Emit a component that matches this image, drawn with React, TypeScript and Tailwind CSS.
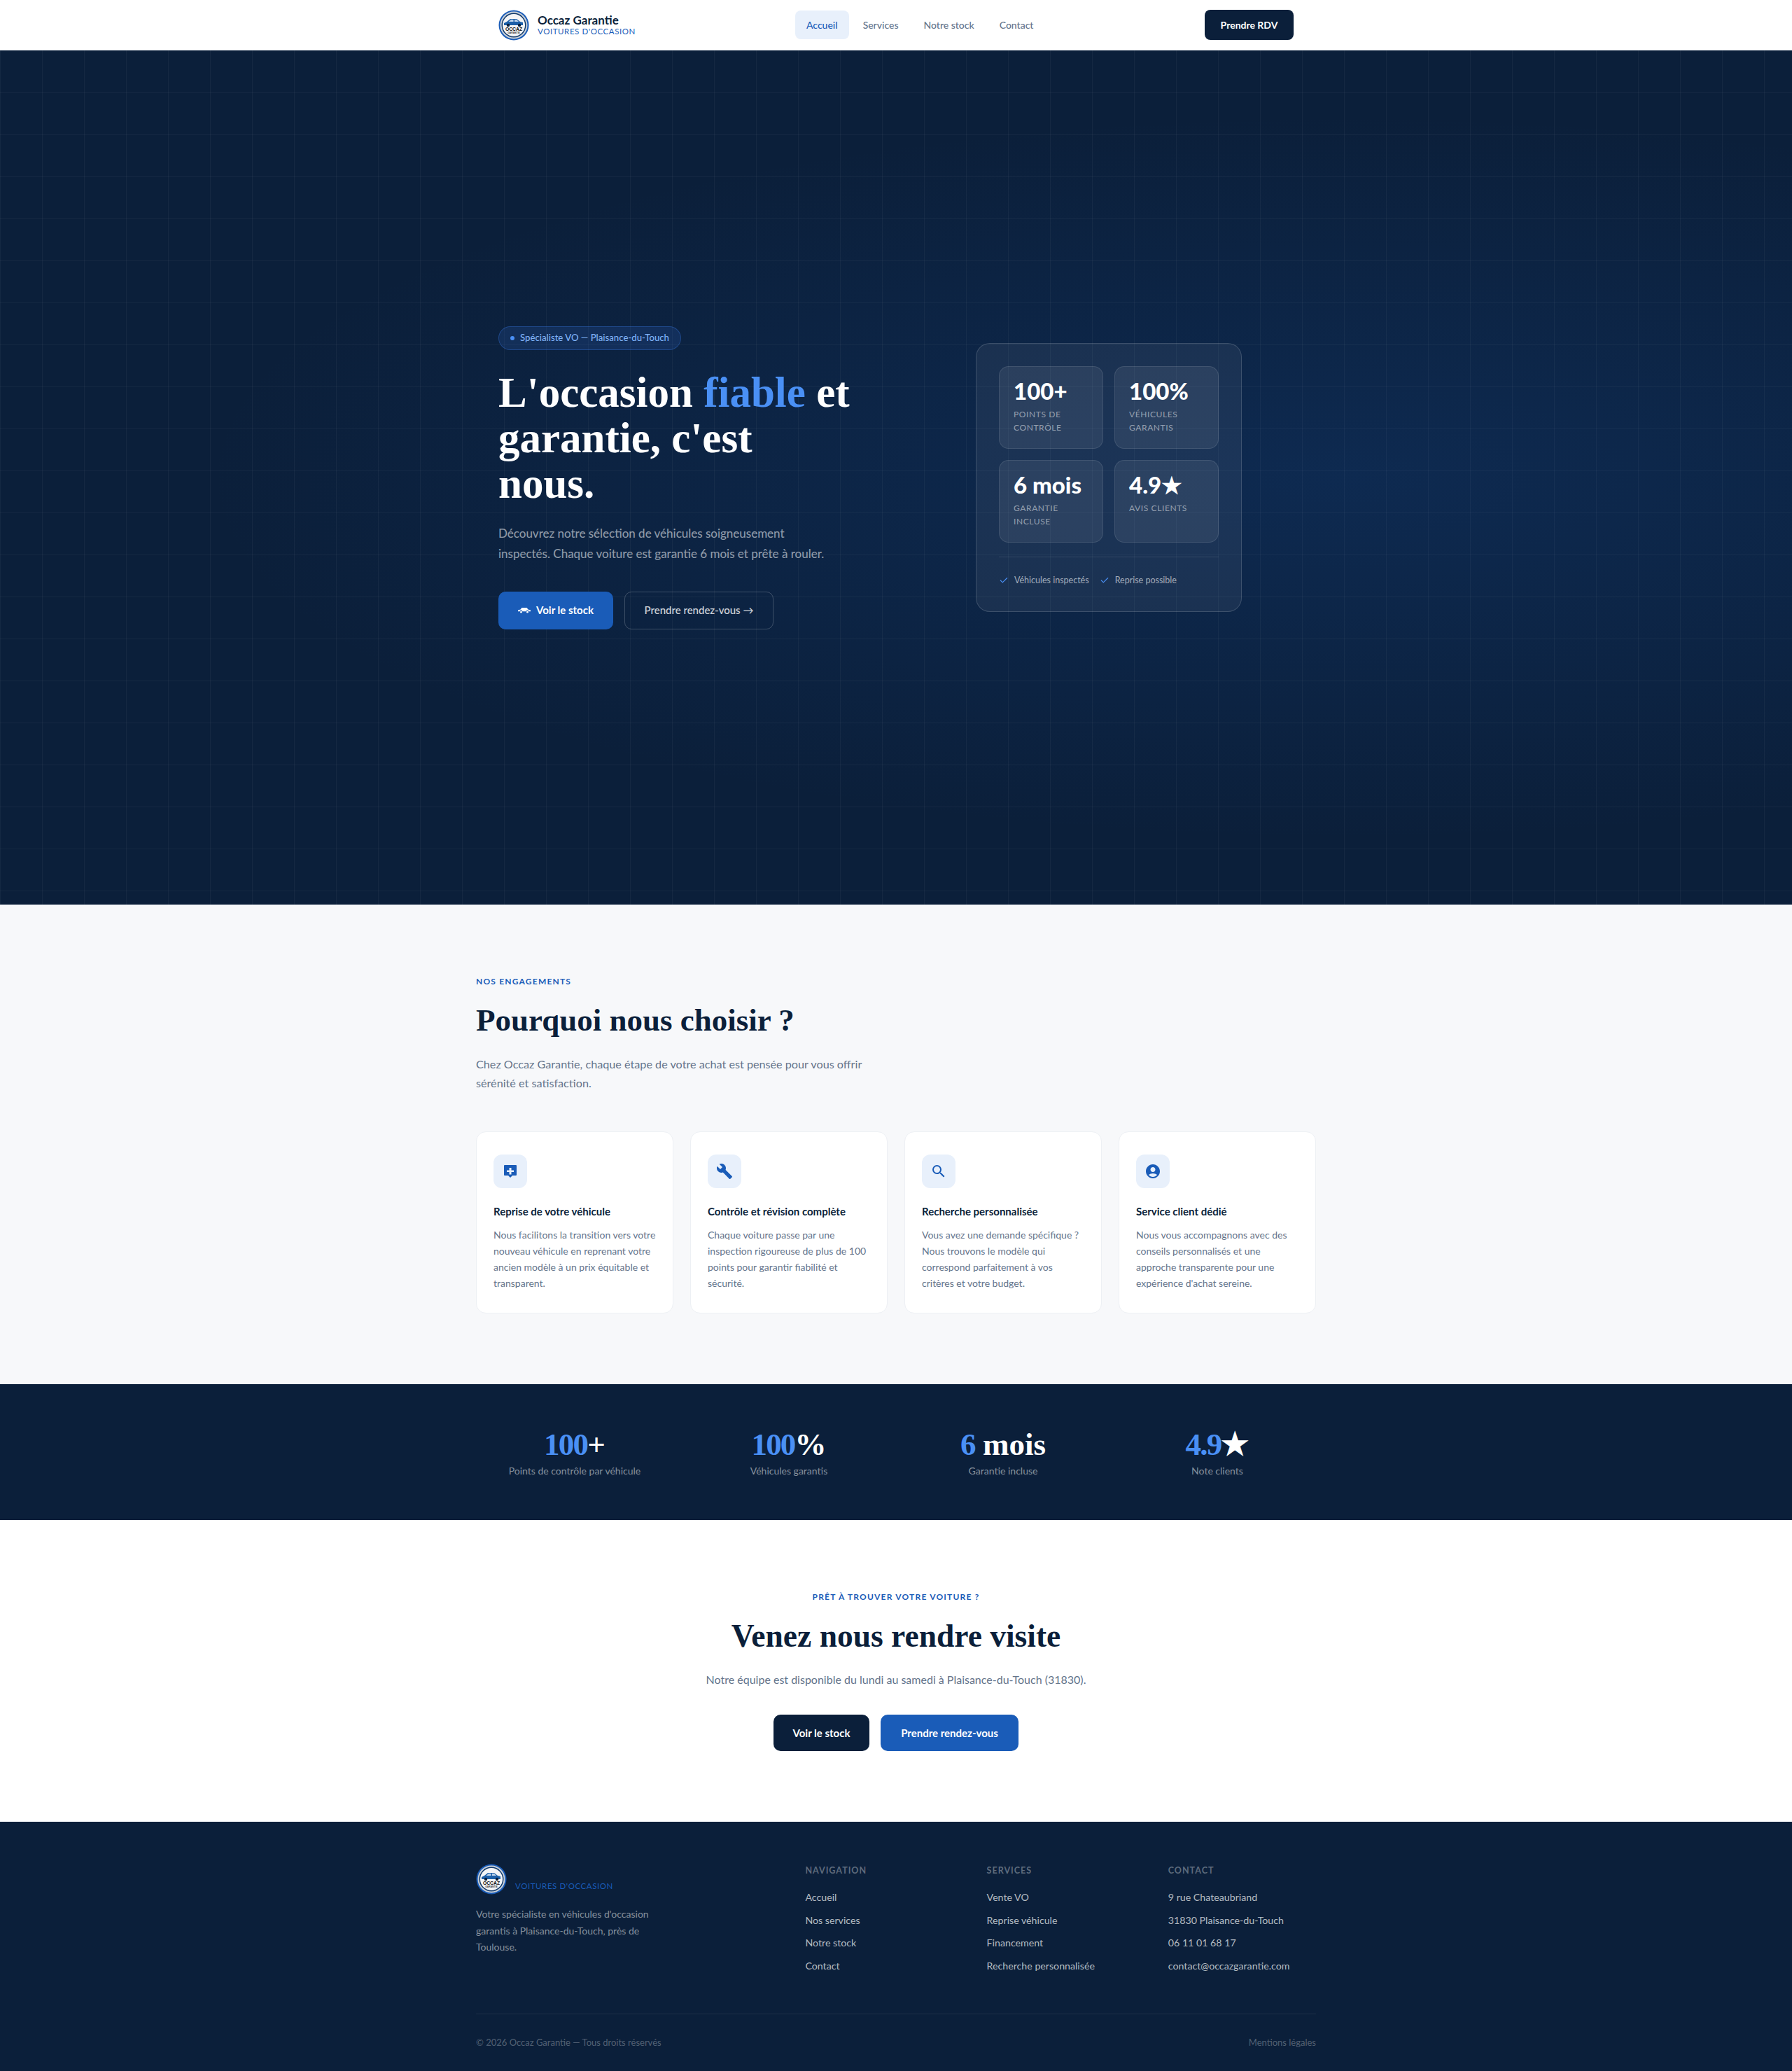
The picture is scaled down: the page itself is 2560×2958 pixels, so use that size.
import { Check } from 'lucide-react';
import { MdAccountCircle, MdBuild, MdSearch } from 'react-icons/md';

const SERIF = "font-['Liberation_Serif',serif]";

const FEATURES = [
  {
    title: 'Reprise de votre véhicule',
    text: 'Nous facilitons la transition vers votre nouveau véhicule en reprenant votre ancien modèle à un prix équitable et transparent.',
    icon: 'bubble',
  },
  {
    title: 'Contrôle et révision complète',
    text: 'Chaque voiture passe par une inspection rigoureuse de plus de 100 points pour garantir fiabilité et sécurité.',
    icon: 'wrench',
  },
  {
    title: 'Recherche personnalisée',
    text: 'Vous avez une demande spécifique ? Nous trouvons le modèle qui correspond parfaitement à vos critères et votre budget.',
    icon: 'search',
  },
  {
    title: 'Service client dédié',
    text: "Nous vous accompagnons avec des conseils personnalisés et une approche transparente pour une expérience d'achat sereine.",
    icon: 'user',
  },
];

const FOOTER_COLUMNS = [
  { title: 'NAVIGATION', links: ['Accueil', 'Nos services', 'Notre stock', 'Contact'] },
  { title: 'SERVICES', links: ['Vente VO', 'Reprise véhicule', 'Financement', 'Recherche personnalisée'] },
  { title: 'CONTACT', links: ['9 rue Chateaubriand', '31830 Plaisance-du-Touch', '06 11 01 68 17', 'contact@occazgarantie.com'] },
];

function Logo() {
  return (
    <svg viewBox="0 0 44 44" className="h-11 w-11 shrink-0">
      <circle cx="22" cy="22" r="21.5" fill="#1a5cb8" />
      <circle cx="22" cy="22" r="19.5" fill="#c9d0d8" />
      <circle cx="22" cy="22" r="17.5" fill="#123a6b" />
      <circle cx="22" cy="22" r="16" fill="#f4f5f7" />
      <path d="M8 22v-3l4-2 5-4h9l5 4 4 1v4z" fill="#1d5fa8" />
      <path d="M18 14h3.500v3H14.500zM23 14h3l3 3h-6z" fill="#bcd3ec" />
      <circle cx="14" cy="22" r="2.200" fill="#0b1f3a" />
      <circle cx="30" cy="22" r="2.200" fill="#0b1f3a" />
      <text x="22" y="29.500" textAnchor="middle" fontSize="6.800" fontWeight="700" fill="#111" fontFamily="Liberation Sans">OCCAZ</text>
      <text x="22" y="34" textAnchor="middle" fontSize="3.400" fontWeight="700" fill="#333" fontFamily="Liberation Sans">GARANTIE</text>
    </svg>
  );
}

function FeatureIcon({ name }: { name: string }) {
  if (name === 'wrench') return <MdBuild className="h-6 w-6 text-[#1a5cb8]" />;
  if (name === 'search') return <MdSearch className="h-6 w-6 text-[#1a5cb8]" />;
  if (name === 'user') return <MdAccountCircle className="h-6 w-6 text-[#1a5cb8]" />;
  return (
    <svg viewBox="0 0 24 24" className="h-6 w-6" fill="#1a5cb8">
      <path d="M4 3h16a1 1 0 0 1 1 1v13a1 1 0 0 1-1 1h-5l-3 3-3-3H4a1 1 0 0 1-1-1V4a1 1 0 0 1 1-1zm6.500 4v3.500H7v2.500h3.500V16.500h3V13H17v-2.500h-3.500V7z" fillRule="evenodd" />
    </svg>
  );
}

function StatTile({ value, label }: { value: string; label: string }) {
  return (
    <div className="h-[118px] rounded-[14px] border border-white/10 bg-white/[0.07] px-5 pt-[17px]">
      <div className="text-[33px] leading-[34px] font-black text-white">{value}</div>
      <div className="mt-[7px] text-[12px] leading-[19px] tracking-[0.05em] text-white/50 uppercase">{label}</div>
    </div>
  );
}

function BandStat({ accent, rest, label }: { accent: string; rest: string; label: string }) {
  return (
    <div className="text-center">
      <div className={`${SERIF} text-[45px] leading-[53px] font-bold text-white`}>
        <span className="tracking-[-0.04em] text-[#4a90f5]">{accent}</span>
        {rest}
      </div>
      <div className="mt-[1px] text-[14px] leading-[20px] text-white/50">{label}</div>
    </div>
  );
}

export default function App() {
  return (
    <div className="min-h-[2958px] bg-white font-['Lato',sans-serif] text-[#0b1f3a]">
      {/* Nav */}
      <header className="h-[72px] border-b border-[#e8ecf1] bg-white">
        <div className="mx-auto flex h-full w-[1136px] items-center">
          <div className="flex w-[424px] items-center gap-3">
            <Logo />
            <div>
              <div className="text-[17px] leading-[18px] font-bold">Occaz Garantie</div>
              <div className="text-[11.500px] leading-[14px] tracking-[0.05em] text-[#1a5cb8]">VOITURES D'OCCASION</div>
            </div>
          </div>
          <nav className="flex items-center gap-1 text-[14px] font-medium text-[#64748b]">
            <a className="rounded-lg bg-[#e8f0fb] px-4 py-[10px] text-[#1a5cb8]">Accueil</a>
            <a className="px-4 py-[10px]">Services</a>
            <a className="px-4 py-[10px]">Notre stock</a>
            <a className="px-4 py-[10px]">Contact</a>
          </nav>
          <a className="ml-auto flex h-[43px] w-[127px] items-center justify-center rounded-lg bg-[#0b1f3a] text-[14px] font-bold text-white">Prendre RDV</a>
        </div>
      </header>

      {/* Hero */}
      <section className="h-[1220px] bg-[#0b1f3a] bg-[linear-gradient(rgba(255,255,255,0.04)_1px,transparent_1px),linear-gradient(90deg,rgba(255,255,255,0.04)_1px,transparent_1px),radial-gradient(ellipse_at_75%_50%,rgba(26,92,184,0.18),transparent_60%)] bg-[size:60px_60px,60px_60px,100%_100%]">
        <div className="mx-auto grid h-full w-[1136px] grid-cols-2 items-center gap-20">
          <div>
            <div className="inline-flex h-[34px] items-center gap-2 rounded-full border border-[#3b82f6]/30 bg-[#3b82f6]/15 px-4 text-[13.200px] font-medium text-[#7fb2f7]">
              <span className="h-1.5 w-1.5 rounded-full bg-[#4a90f5]" />
              Spécialiste VO — Plaisance-du-Touch
            </div>
            <h1 className={`${SERIF} mt-[28px] text-[61px] leading-[65px] font-bold text-white`}>
              <span className="block">
                L'occasion <span className="text-[#4a90f5]">fiable</span> et
              </span>
              <span className="block">garantie, c'est</span>
              <span className="block">nous.</span>
            </h1>
            <p className="mt-6 w-[480px] text-[17px] leading-[29px] text-white/55">
              Découvrez notre sélection de véhicules soigneusement inspectés. Chaque voiture est garantie 6 mois et prête à rouler.
            </p>
            <div className="mt-10 flex gap-4">
              <a className="flex h-[54px] w-[164px] items-center justify-center gap-2 rounded-[10px] bg-[#1a5cb8] text-[15px] font-bold text-white">
                <svg viewBox="0 0 20 10" className="h-[9px] w-[18px]" fill="white">
                  <path d="M0 7V5l4-1 2-3h8l2 3 4 1v2h-3a2 2 0 0 0-4 0H7a2 2 0 0 0-4 0z" />
                  <circle cx="5" cy="8" r="1.500" />
                  <circle cx="15" cy="8" r="1.500" />
                </svg>
                Voir le stock
              </a>
              <a className="flex h-[54px] w-[213px] items-center justify-center rounded-[10px] border border-white/20 text-[15px] font-medium text-white/80">
                Prendre rendez-vous →
              </a>
            </div>
          </div>
          <div className="flex justify-center">
            <div className="h-[384px] w-[380px] rounded-[20px] border border-white/15 bg-white/[0.06] p-8">
              <div className="grid grid-cols-2 gap-4">
                <StatTile value="100+" label="Points de contrôle" />
                <StatTile value="100%" label="Véhicules garantis" />
                <StatTile value="6 mois" label="Garantie incluse" />
                <StatTile value="4.9★" label="Avis clients" />
              </div>
              <div className="mt-5 flex items-center gap-[15px] border-t border-white/10 pt-[23px] text-[12.500px] leading-[20px] text-white/60">
                <span className="flex items-center gap-2"><Check className="h-3.5 w-3.5 text-[#4a90f5]" />Véhicules inspectés</span>
                <span className="flex items-center gap-2"><Check className="h-3.5 w-3.5 text-[#4a90f5]" />Reprise possible</span>
              </div>
            </div>
          </div>
        </div>
      </section>

      {/* Engagements */}
      <section className="h-[685px] bg-[#f7f8fa] pt-[101px]">
        <div className="mx-auto w-[1200px]">
          <div className="text-[12px] leading-[18px] font-bold tracking-[0.1em] text-[#1a5cb8]">NOS ENGAGEMENTS</div>
          <h2 className={`${SERIF} mt-[21px] text-[45px] leading-[50px] font-bold`}>Pourquoi nous choisir ?</h2>
          <p className="mt-[24px] w-[580px] text-[16.200px] leading-[27px] text-[#64748b]">
            Chez Occaz Garantie, chaque étape de votre achat est pensée pour vous offrir sérénité et satisfaction.
          </p>
          <div className="mt-[56px] grid grid-cols-4 gap-6">
            {FEATURES.map(f => (
              <div key={f.title} className="h-[260px] rounded-[14px] border border-[#edf0f4] bg-white px-6 pt-8">
                <div className="flex h-12 w-12 items-center justify-center rounded-xl bg-[#e8f0fb]">
                  <FeatureIcon name={f.icon} />
                </div>
                <h3 className="mt-[23px] text-[15px] leading-[20px] font-bold">{f.title}</h3>
                <p className="mt-[12px] text-[14px] leading-[23px] text-[#64748b]">{f.text}</p>
              </div>
            ))}
          </div>
        </div>
      </section>

      {/* Stat band */}
      <section className="flex h-[194px] items-center bg-[#0b1f3a]">
        <div className="mx-auto grid w-[1200px] grid-cols-4 gap-6">
          <BandStat accent="100" rest="+" label="Points de contrôle par véhicule" />
          <BandStat accent="100" rest="%" label="Véhicules garantis" />
          <BandStat accent="6" rest=" mois" label="Garantie incluse" />
          <BandStat accent="4.9" rest="★" label="Note clients" />
        </div>
      </section>

      {/* CTA */}
      <section className="h-[431px] bg-white pt-[101px] text-center">
        <div className="text-[12px] leading-[18px] font-bold tracking-[0.1em] text-[#1a5cb8]">PRÊT À TROUVER VOTRE VOITURE ?</div>
        <h2 className={`${SERIF} mt-[22px] text-[45.500px] leading-[50px] font-bold`}>Venez nous rendre visite</h2>
        <p className="mt-[25px] text-[16px] leading-[24px] text-[#64748b]">
          Notre équipe est disponible du lundi au samedi à Plaisance-du-Touch (31830).
        </p>
        <div className="mt-[38px] flex justify-center gap-4">
          <a className="flex h-[52px] w-[137px] items-center justify-center rounded-[10px] bg-[#0b1f3a] text-[15px] font-bold text-white">Voir le stock</a>
          <a className="flex h-[52px] w-[197px] items-center justify-center rounded-[10px] bg-[#1a5cb8] text-[15px] font-bold text-white">Prendre rendez-vous</a>
        </div>
      </section>

      {/* Footer */}
      <footer className="h-[356px] bg-[#0b1f3a] pt-[60px]">
        <div className="mx-auto w-[1200px]">
          <div className="grid h-[214px] grid-cols-[2fr_1fr_1fr_1fr] gap-12">
            <div>
              <div className="flex items-end gap-3">
                <Logo />
                <div className="pb-[5px] text-[11.500px] leading-[14px] tracking-[0.05em] text-[#1a5cb8]">VOITURES D'OCCASION</div>
              </div>
              <p className="mt-4 w-[260px] text-[14px] leading-[23.500px] text-white/50">
                Votre spécialiste en véhicules d'occasion garantis à Plaisance-du-Touch, près de Toulouse.
              </p>
            </div>
            {FOOTER_COLUMNS.map(col => (
              <div key={col.title}>
                <div className="text-[12.500px] leading-[20px] font-bold tracking-[0.08em] text-white/35">{col.title}</div>
                <ul className="mt-[18px] flex flex-col gap-[12.500px] text-[14.200px] leading-[20px] text-white/70">
                  {col.links.map(l => <li key={l}>{l}</li>)}
                </ul>
              </div>
            ))}
          </div>
          <div className="flex items-center justify-between border-t border-white/[0.07] pt-[30px] text-[13px] leading-[20px] text-white/30">
            <span>© 2026 Occaz Garantie — Tous droits réservés</span>
            <span>Mentions légales</span>
          </div>
        </div>
      </footer>
    </div>
  );
}
